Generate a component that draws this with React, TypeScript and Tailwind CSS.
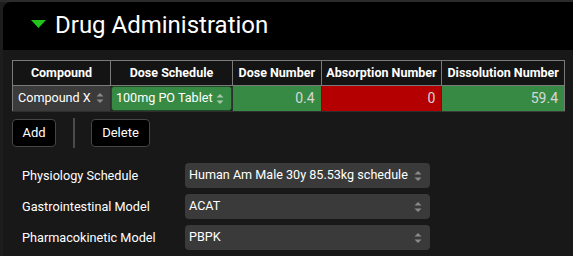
import React from "react";

const Arrows = ({ color = "#8a8a8a" }: { color?: string }) => (
  <svg width="8" height="12" viewBox="0 0 8 12" className="shrink-0">
    <path d="M4 1 L7.5 4.5 H0.5 Z" fill={color} />
    <path d="M4 11 L7.5 7.5 H0.5 Z" fill={color} />
  </svg>
);

const Select = ({ value }: { value: string }) => (
  <div className="w-[245px] h-[25px] bg-[#3a3a3a] rounded-[4px] flex items-center justify-between pl-[4px] pr-[8px] text-[12.6px] text-white">
    <span className="whitespace-nowrap">{value}</span>
    <Arrows />
  </div>
);

export default function App() {
  const font = { fontFamily: "Roboto, 'Liberation Sans', sans-serif" };
  return (
    <div className="w-[573px] h-[256px] bg-[#1d1d1d] border-t-2 border-[#2b2b2b] pl-[3px] overflow-hidden" style={font}>
      <div className="h-full flex flex-col">
        <div className="h-[48px] bg-black rounded-tl-[8px] flex items-center pl-[28px] shrink-0">
          <svg width="15" height="8" viewBox="0 0 15 8" className="mr-[9px] mt-[-4px]">
            <path d="M0 0 H15 L7.5 8 Z" fill="#22c41c" />
          </svg>
          <span className="text-[24px] text-white leading-none mt-[-2px] whitespace-nowrap">Drug Administration</span>
        </div>
        <div className="flex-1 bg-[#181818] pl-[9px] pt-[10px]">
          <table className="border-collapse text-white" style={{ width: 553 }}>
            <thead>
              <tr className="h-[25px] text-[12.5px] font-bold">
                <th className="border border-[#7a7a7a] bg-[#141414] w-[98px] font-bold p-0">Compound</th>
                <th className="border border-[#7a7a7a] bg-[#141414] w-[122px] font-bold p-0">Dose Schedule</th>
                <th className="border border-[#7a7a7a] bg-[#141414] w-[89px] font-bold p-0">Dose Number</th>
                <th className="border border-[#7a7a7a] bg-[#141414] w-[121px] font-bold p-0">Absorption Number</th>
                <th className="border border-[#7a7a7a] bg-[#141414] w-[123px] font-bold p-0">Dissolution Number</th>
              </tr>
            </thead>
            <tbody>
              <tr className="h-[26px] text-[12.6px]">
                <td className="border border-[#2e2e2e] border-l-[#7a7a7a] bg-[#3b3b3b] p-0">
                  <div className="flex items-center justify-between pl-[5px] pr-[6px] whitespace-nowrap">
                    <span>Compound X</span>
                    <Arrows />
                  </div>
                </td>
                <td className="border border-[#2e2e2e] bg-[#1a1a1a] p-0">
                  <div className="h-[25px] bg-[#378a44] border border-[#1f4a26] rounded-[3px] flex items-center justify-between pl-[4px] pr-[7px] whitespace-nowrap">
                    <span>100mg PO Tablet</span>
                    <Arrows color="#a8c8ad" />
                  </div>
                </td>
                <td className="border border-[#2e2e2e] bg-[#378a44] text-right pr-[6px] text-[#d8d8d8] text-[14px]">0.4</td>
                <td className="border border-[#2e2e2e] bg-[#b40000] text-right pr-[6px] text-[#d8d8d8] text-[14px]">0</td>
                <td className="border border-[#2e2e2e] border-r-[#7a7a7a] border-b-[#3a3a3a] bg-[#378a44] text-right pr-[6px] text-[#d8d8d8] text-[14px]">59.4</td>
              </tr>
            </tbody>
          </table>
          <div className="flex items-center mt-[7px] h-[28px]">
            <button className="h-[28px] w-[44px] bg-black border border-[#454545] rounded-[4px] text-white text-[13px]">Add</button>
            <div className="w-[2px] h-[30px] bg-[#4a4a4a] ml-[17px] mr-[16px]" />
            <button className="h-[28px] w-[59px] bg-black border border-[#454545] rounded-[4px] text-white text-[13px]">Delete</button>
          </div>
          <div className="flex flex-col gap-[6px] mt-[16px] pl-[10px]">
            <div className="flex items-center">
              <span className="w-[163px] text-[12.7px] text-white whitespace-nowrap">Physiology Schedule</span>
              <Select value="Human Am Male 30y 85.53kg schedule" />
            </div>
            <div className="flex items-center">
              <span className="w-[163px] text-[12.7px] text-white whitespace-nowrap">Gastrointestinal Model</span>
              <Select value="ACAT" />
            </div>
            <div className="flex items-center">
              <span className="w-[163px] text-[12.7px] text-white whitespace-nowrap">Pharmacokinetic Model</span>
              <Select value="PBPK" />
            </div>
          </div>
        </div>
      </div>
    </div>
  );
}
